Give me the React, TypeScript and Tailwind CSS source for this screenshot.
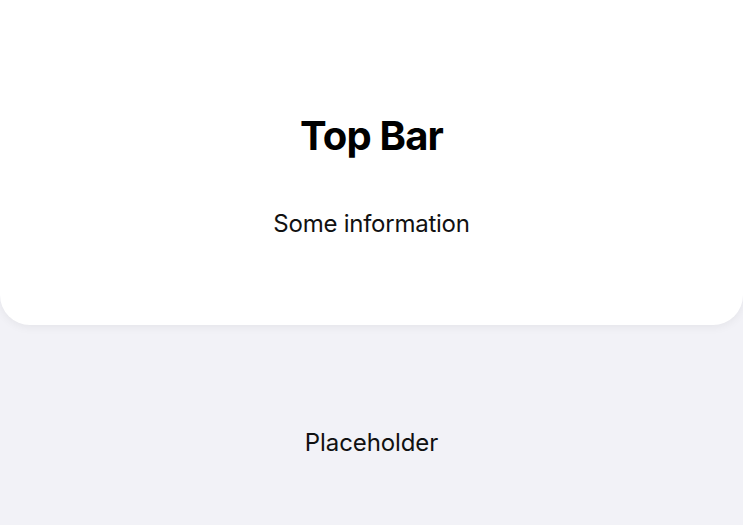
import React from "react";

export default function App() {
  return (
    <div
      className="h-[525px] w-full overflow-hidden bg-[#f2f2f7] flex flex-col"
      style={{ fontFamily: "Inter, 'Noto Sans', sans-serif" }}
    >
      <div className="h-[325px] shrink-0 bg-white rounded-b-[30px] shadow-[0_2px_10px_rgba(0,0,0,0.06)] flex flex-col items-center">
        <h1 className="mt-[111px] text-[40px] leading-[50px] font-bold text-black tracking-[-0.8px]">
          Top Bar
        </h1>
        <p className="mt-[48px] text-[24px] leading-[30px] text-[#111] tracking-[-0.25px]">
          Some information
        </p>
      </div>
      <div className="flex justify-center pt-[103px]">
        <p className="text-[24px] leading-[30px] text-[#111] tracking-[-0.1px]">Placeholder</p>
      </div>
    </div>
  );
}
